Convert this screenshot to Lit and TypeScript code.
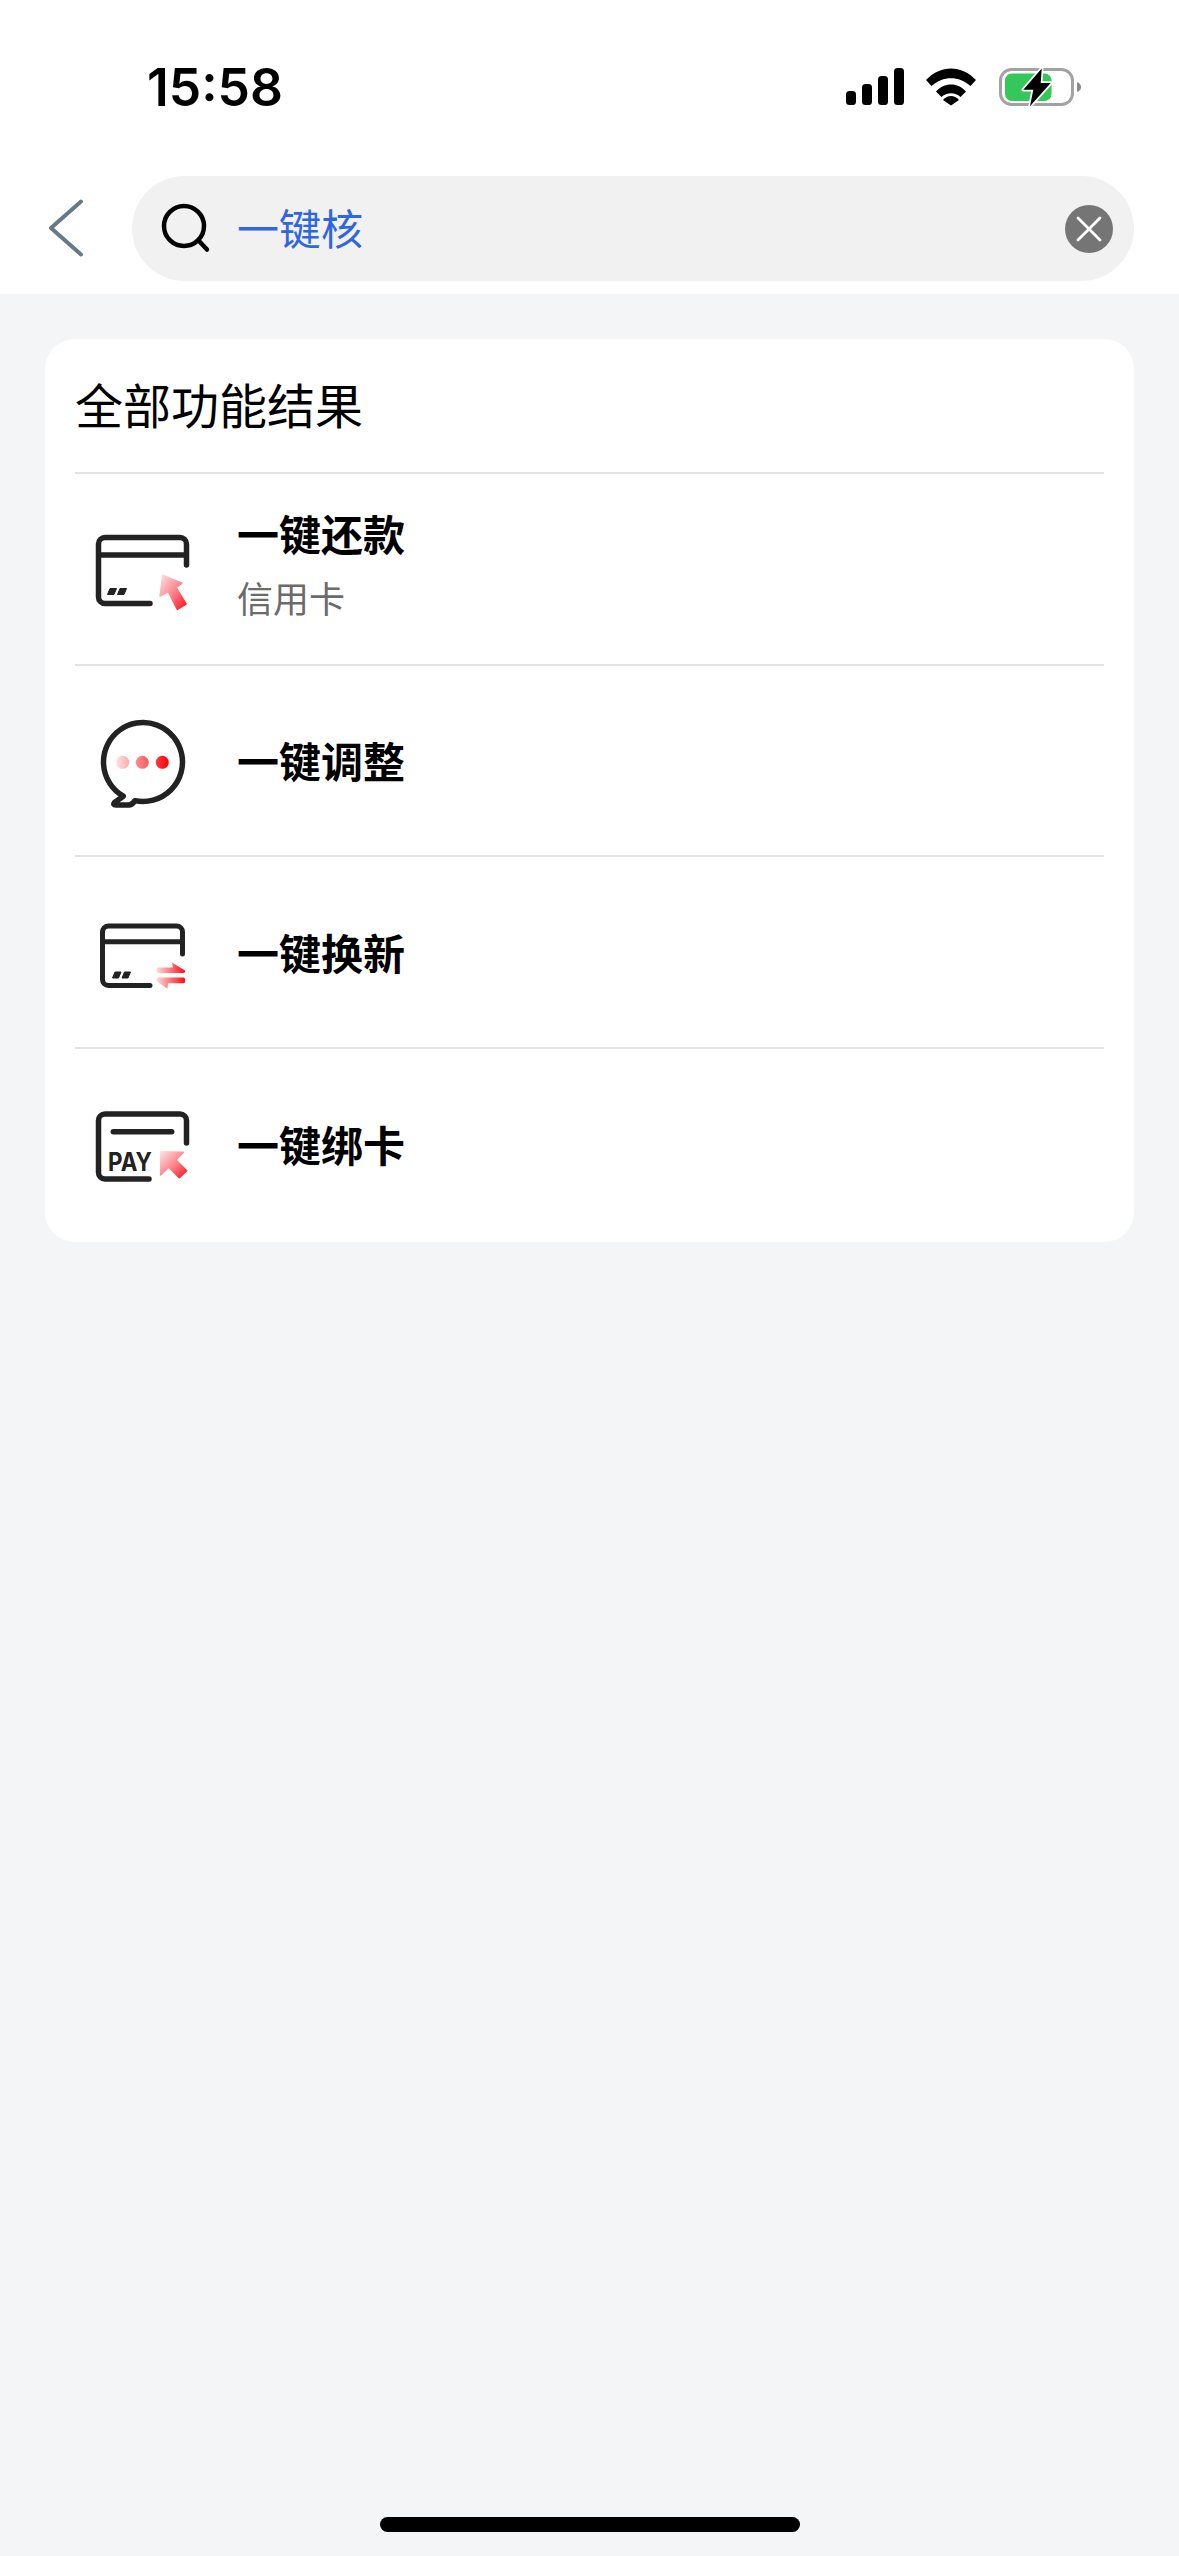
import { LitElement, html, css, svg } from "lit";
import { customElement } from "lit/decorators.js";

const defs = svg`
  <defs>
    <linearGradient id="ga" x1="0" y1="0" x2="1" y2="1">
      <stop offset="0" stop-color="#fde3e3"/><stop offset="0.55" stop-color="#fb7d85"/><stop offset="1" stop-color="#fb0d1b"/>
    </linearGradient>
    <linearGradient id="gb" gradientUnits="userSpaceOnUse" x1="31" y1="0" x2="84" y2="0">
      <stop offset="0" stop-color="#fee3e3"/><stop offset="1" stop-color="#fe0006"/>
    </linearGradient>
    <linearGradient id="gc" gradientUnits="userSpaceOnUse" x1="71" y1="0" x2="100" y2="0">
      <stop offset="0" stop-color="#fee0e0"/><stop offset="1" stop-color="#fe0a12"/>
    </linearGradient>
  </defs>`;

const iconRepay = svg`
  <path class="ln" d="M65 84.500H20A6.500 6.500 0 0 1 13.500 78V25A6.500 6.500 0 0 1 20 18.500H95A6.500 6.500 0 0 1 101.500 25V46M13.500 36H101.500"/>
  <path class="dk" d="M25 69.500H31.500L29 75.500H22.500ZM35 69.500H41.500L39 75.500H32.500Z"/>
  <path fill="url(#ga)" stroke="url(#ga)" stroke-width="1.500" stroke-linejoin="round" d="M77.700 56.300L96.700 64.300L91 68.300L101 85L92.300 90.300L83.300 72.700L75 77Z"/>`;

const iconChat = svg`
  <path class="ln" d="M38.300 86.240L29.500 92.500Q27.500 95 31 95H44Q47 95 50 90.680A39.500 39.500 0 1 0 38.300 86.240Z"/>
  <circle cx="37.700" cy="52.300" r="6.500" fill="url(#gb)"/>
  <circle cx="57.300" cy="52.300" r="6.500" fill="url(#gb)"/>
  <circle cx="77.300" cy="52.300" r="6.500" fill="url(#gb)"/>`;

const iconSwap = svg`
  <path class="ln2" d="M65 83.500H23.500A6 6 0 0 1 17.500 77.500V30A6 6 0 0 1 23.500 24H91.500A6 6 0 0 1 97.500 30V52M17.500 39.700H97.500"/>
  <path class="dk" d="M30 70H36L33.500 76H27.500ZM39.500 70H45.500L43 76H37Z"/>
  <path fill="url(#gc)" d="M71.500 65.500H88L87 60.500L100 68.500Q100.500 71 98 71H73Q71.500 71 71.500 69Z"/>
  <path fill="url(#gc)" d="M73 75.500H98.500Q100 75.500 100 77.500V79.500Q100 81.300 98.500 81.300H83L82.500 86.700L71.500 79Q71 76 73 75.500Z"/>`;

const iconPay = svg`
  <path class="ln" d="M64 85H20A6.500 6.500 0 0 1 13.500 78.500V26.500A6.500 6.500 0 0 1 20 20H95A6.500 6.500 0 0 1 101.500 26.500V49M28.300 37.700H86.700"/>
  <text class="pay" x="23" y="76.700" textLength="44" lengthAdjust="spacingAndGlyphs">PAY</text>
  <path fill="url(#ga)" stroke="url(#ga)" stroke-width="1.500" stroke-linejoin="round" d="M75.700 57.700L98.300 58.300L91 66L101.700 76.700L94.300 83.700L83.700 73.300L75.700 81Z"/>`;

const rows = [
  { title: "一键还款", sub: "信用卡", icon: iconRepay },
  { title: "一键调整", sub: "", icon: iconChat },
  { title: "一键换新", sub: "", icon: iconSwap },
  { title: "一键绑卡", sub: "", icon: iconPay },
];

@customElement("app-root")
export class AppRoot extends LitElement {
  static styles = css`
    :host {
      display: flex;
      flex-direction: column;
      position: relative;
      width: 1179px;
      height: 2556px;
      background: #f4f5f7;
      overflow: hidden;
      font-family: "Noto Sans CJK SC", "Liberation Sans", sans-serif;
      color: #000;
    }
    .head { background: #fff; height: 294px; box-sizing: border-box; flex: none; }
    .status {
      height: 176px;
      box-sizing: border-box;
      padding: 61px 98px 0 147px;
      display: flex;
      justify-content: space-between;
      align-items: flex-start;
    }
    .time {
      font-family: Inter, "Liberation Sans", sans-serif;
      font-weight: 600;
      font-size: 51.500px;
      line-height: 52px;
    }
    .sicons { display: flex; align-items: flex-start; padding-top: 7px; }
    .sicons svg { display: block; }
    .sig { margin-right: 22px; }
    .wifi { margin-right: 22px; }
    .searchrow {
      display: flex;
      align-items: center;
      height: 105px;
      padding: 0 45px 0 48px;
    }
    .back { width: 84px; height: 105px; flex: none; display: block; }
    .search {
      flex: 1;
      height: 105px;
      background: #f1f1f2;
      border-radius: 53px;
      display: flex;
      align-items: center;
      box-sizing: border-box;
      padding: 0 20px 0 26px;
    }
    .glass { width: 60px; height: 60px; flex: none; display: block; }
    .q {
      flex: 1;
      margin-left: 19px;
      padding-bottom: 3px;
      font-size: 42px;
      line-height: 60px;
      color: #2f66e0;
    }
    .clear { width: 50px; height: 50px; flex: none; display: block; }
    .card {
      margin: 45px 45px 0;
      background: #fff;
      border-radius: 30px;
      padding: 0 30px 4px;
    }
    .ctitle {
      height: 133px;
      box-sizing: border-box;
      font-size: 48px;
      line-height: 129px;
      font-weight: 400;
    }
    .row {
      border-top: 2px solid #e3e3e4;
      height: 191.600px;
      box-sizing: border-box;
      display: flex;
      align-items: center;
      padding-left: 10px;
    }
    .ico { width: 110px; height: 100px; flex: none; display: block; margin-right: 42px; overflow: visible; }
    .ln { fill: none; stroke: #222; stroke-width: 5.500; stroke-linecap: round; stroke-linejoin: round; }
    .ln2 { fill: none; stroke: #222; stroke-width: 5; stroke-linecap: round; stroke-linejoin: round; }
    .dk { fill: #222; stroke: #222; stroke-width: 1; stroke-linejoin: round; }
    .pay { font-family: Inter, "Liberation Sans", sans-serif; font-weight: 700; font-size: 26px; fill: #222; }
    .rtitle { font-size: 42px; font-weight: 700; line-height: 60px; }
    .two { margin-bottom: 13px; }
    .rsub { font-size: 36px; line-height: 50px; color: #6b6b6b; margin-top: 9px; }
    .homebar {
      position: absolute;
      left: 380px;
      bottom: 24px;
      width: 420px;
      height: 15px;
      border-radius: 7.500px;
      background: #000;
    }
  `;

  render() {
    return html`
      <div class="head">
        <div class="status">
          <div class="time">15:58</div>
          <div class="sicons">
            <svg class="sig" width="58" height="38" viewBox="0 0 58 38">
              <rect x="0" y="23" width="10" height="14" rx="3.500"/>
              <rect x="16" y="16" width="10" height="21" rx="3.500"/>
              <rect x="32" y="8" width="10" height="29" rx="3.500"/>
              <rect x="48" y="0" width="10" height="37" rx="3.500"/>
            </svg>
            <svg class="wifi" width="51" height="38" viewBox="0 0 51 38">
              <path d="M0 12C14-3.500 36-3.500 50 12L44.500 18C33 7.500 17 7.500 5.500 18Z"/>
              <path d="M10 23.500C18 14 32 14 40 23.500L34.500 29C29 24 21 24 15.500 29Z"/>
              <path d="M17 32C21.500 26.500 28.500 26.500 33 32L25 37.500Z"/>
            </svg>
            <svg width="82" height="39" viewBox="0 0 82 39">
              <rect x="1.500" y="1.500" width="72" height="35" rx="11" fill="none" stroke="#a2a2a2" stroke-width="3"/>
              <rect x="6" y="5.500" width="46.500" height="27.500" rx="7" fill="#34c759"/>
              <path d="M78 14C81 15 82 17 82 19C82 21 81 23 78 24Z" fill="#8a8a8a"/>
              <path d="M42.700 0.500L24.300 21.700H34.300L31 38.300L51.700 15H41.700Z" fill="#000" stroke="#fff" stroke-width="3.500" paint-order="stroke" stroke-linejoin="round"/>
            </svg>
          </div>
        </div>
        <div class="searchrow">
          <svg class="back" viewBox="0 0 84 105">
            <path d="M33 25.500L3 52L33 78.500" fill="none" stroke="#64798a" stroke-width="4" stroke-linecap="round" stroke-linejoin="round"/>
          </svg>
          <div class="search">
            <svg class="glass" viewBox="0 0 60 60">
              <circle cx="26" cy="27" r="20" fill="none" stroke="#000" stroke-width="4.500"/>
              <path d="M41 42L49 50.500" stroke="#000" stroke-width="4.500" stroke-linecap="round"/>
            </svg>
            <div class="q">一键核</div>
            <svg class="clear" viewBox="0 0 50 50">
              <circle cx="25" cy="25" r="24" fill="#757575"/>
              <path d="M14 14L36 36M36 14L14 36" stroke="#fff" stroke-width="2.800" stroke-linecap="round"/>
            </svg>
          </div>
        </div>
      </div>
      <div class="card">
        <div class="ctitle">全部功能结果</div>
        ${rows.map(
          (r) => html`
            <div class="row">
              <svg class="ico" viewBox="0 0 110 100">${defs}${r.icon}</svg>
              <div class=${r.sub ? "two" : ""}>
                <div class="rtitle">${r.title}</div>
                ${r.sub ? html`<div class="rsub">${r.sub}</div>` : ""}
              </div>
            </div>
          `
        )}
      </div>
      <div class="homebar"></div>
    `;
  }
}
